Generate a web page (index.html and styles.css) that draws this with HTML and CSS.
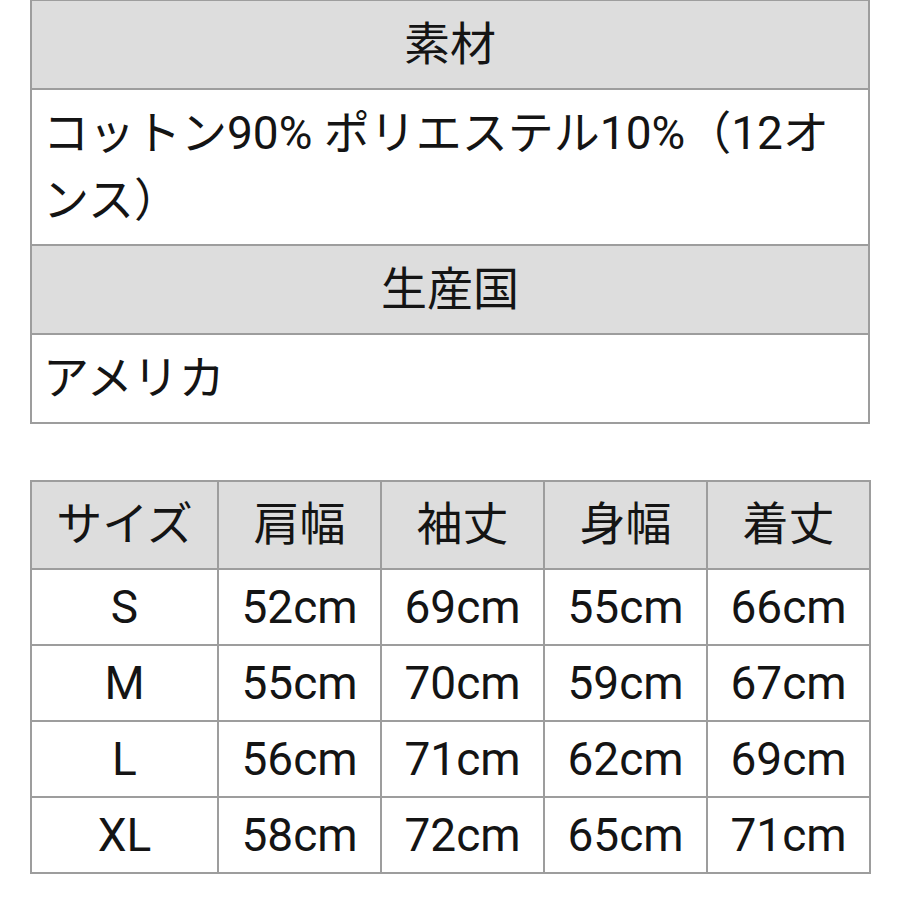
FILE: index.html
```html
<!DOCTYPE html>
<html lang="ja">
<head>
<meta charset="utf-8">
<link rel="stylesheet" href="styles.css">
</head>
<body>
<div class="page">
  <table class="spec">
    <tr><th>素材</th></tr>
    <tr><td>コットン90% ポリエステル10%（12オンス）</td></tr>
    <tr><th>生産国</th></tr>
    <tr><td>アメリカ</td></tr>
  </table>
  <table class="size">
    <colgroup>
      <col class="c1"><col class="cn"><col class="cn"><col class="cn"><col class="cn">
    </colgroup>
    <tr><th>サイズ</th><th>肩幅</th><th>袖丈</th><th>身幅</th><th>着丈</th></tr>
    <tr><td>S</td><td>52cm</td><td>69cm</td><td>55cm</td><td>66cm</td></tr>
    <tr><td>M</td><td>55cm</td><td>70cm</td><td>59cm</td><td>67cm</td></tr>
    <tr><td>L</td><td>56cm</td><td>71cm</td><td>62cm</td><td>69cm</td></tr>
    <tr><td>XL</td><td>58cm</td><td>72cm</td><td>65cm</td><td>71cm</td></tr>
  </table>
</div>
</body>
</html>
```
FILE: styles.css
```css
html, body {
  margin: 0;
  padding: 0;
  background: #ffffff;
}
body {
  font-family: Roboto, "Noto Sans CJK JP", sans-serif;
  font-size: 46px;
  color: #141414;
}
.page {
  padding: 0 30px;
  margin-top: -1px;
}
table {
  width: 840px;
  border-collapse: collapse;
}
th, td {
  border: 2px solid #9d9d9d;
  font-weight: normal;
}
th {
  background: #dddddd;
  text-align: center;
  padding: 10px 11px;
  line-height: 67px;
}
.spec td {
  text-align: left;
  padding: 10px 11px;
  line-height: 67px;
}
.size {
  margin-top: 56px;
  table-layout: fixed;
}
.size th {
  padding: 9px 4px 10px;
}
.size .c1 { width: 187px; }
.size .cn { width: 163px; }
.size td {
  text-align: center;
  padding: 10px 4px;
  line-height: 54px;
}
```
